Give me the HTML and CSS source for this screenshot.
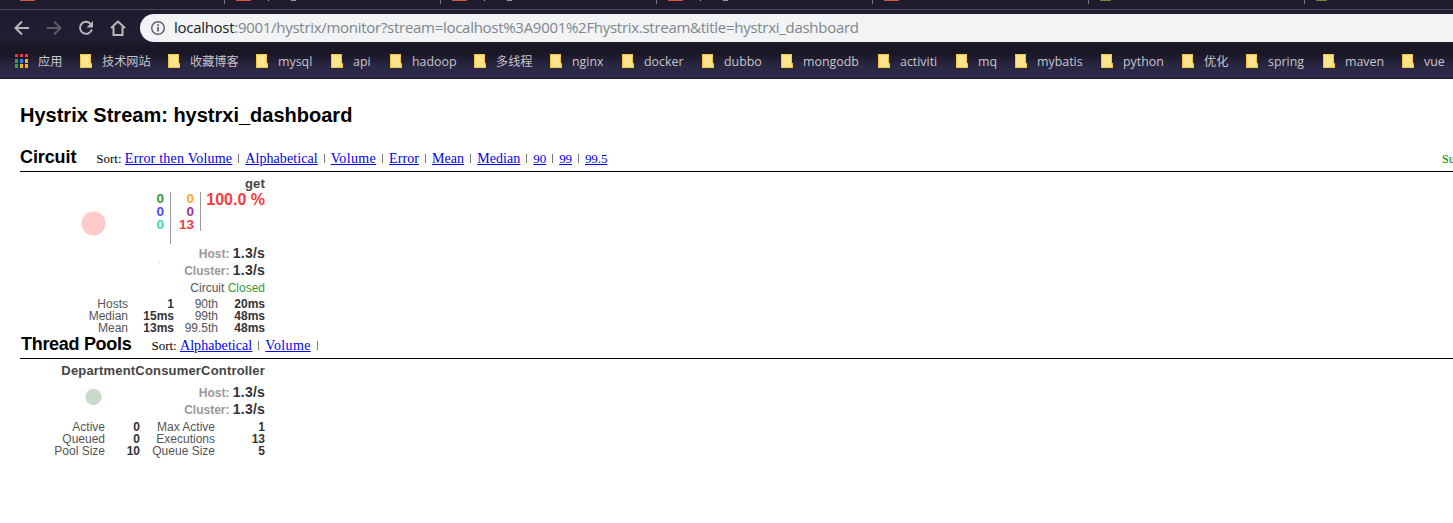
FILE: index.html
```html
<!DOCTYPE html>
<html lang="en">
<head>
<meta charset="utf-8">
<title>Hystrix Monitor</title>
<link rel="stylesheet" href="styles.css">
</head>
<body>
<header class="browser">
  <div class="tabs">
    <div class="tab"><i class="fav red"></i></div>
    <div class="tab"><i class="fav red"></i><i class="stem"></i><i class="loop"></i></div>
    <div class="tab"><i class="fav red"></i><i class="stem"></i><i class="loop"></i></div>
    <div class="tab"><i class="fav red"></i><i class="stem"></i><i class="loop"></i></div>
    <div class="tab"><i class="fav red"></i></div>
    <div class="tab"><i class="fav olive"></i></div>
    <div class="tab"><i class="fav olive"></i></div>
  </div>
  <div class="toolbar">
    <svg class="nav" viewBox="0 0 140 28" fill="none" stroke="#b9b9bc" stroke-width="2">
      <path d="M29 14H16.5M22 7.5 15.5 14 22 20.5"/>
      <path stroke="#5c5a66" d="M47 14H60M54 7.5 60.500 14 54 20.500"/>
      <path d="M90.500 9.800A6 6 0 1 0 91.800 15.500"/>
      <path fill="#b9b9bc" stroke="none" d="M93 7v6.500h-6.500z"/>
      <path d="M111 14 118 7.500 125 14M113.500 13V21H122.500V13"/>
    </svg>
    <div class="address">
      <svg class="info" viewBox="0 0 16 16" fill="none" stroke="#5f6368"><circle cx="8" cy="8" r="6.300" stroke-width="1.500"/><path stroke-width="1.800" d="M8 7v4.500M8 4.200v1.800"/></svg>
      <span class="url"><b>localhost</b>:9001/hystrix/monitor?stream=localhost%3A9001%2Fhystrix.stream&amp;title=hystrxi_dashboard</span>
    </div>
  </div>
  <nav class="bookmarks">
    <a class="apps"><svg class="grid" viewBox="0 0 13 14"><path fill="#f33" d="M0 0h3v3H0zM5 0h3v3H5zM10 0h3v3h-3z"/><path fill="#2fa35b" d="M0 5h3v4H0zM0 10h3v4H0z"/><path fill="#2684fc" d="M5 5h3v4H5z"/><path fill="#ffad0a" d="M10 5h3v4h-3zM5 10h3v4H5zM10 10h3v4h-3z"/></svg>应用</a>
    <a class="w88 cjk"><i class="folder"></i>技术网站</a>
    <a class="w88 cjk"><i class="folder"></i>收藏博客</a>
    <a class="w75"><i class="folder"></i>mysql</a>
    <a class="w59"><i class="folder"></i>api</a>
    <a class="w84"><i class="folder"></i>hadoop</a>
    <a class="w76 cjk"><i class="folder"></i>多线程</a>
    <a class="w72"><i class="folder"></i>nginx</a>
    <a class="w80"><i class="folder"></i>docker</a>
    <a class="w79"><i class="folder"></i>dubbo</a>
    <a class="w97"><i class="folder"></i>mongodb</a>
    <a class="w78"><i class="folder"></i>activiti</a>
    <a class="w59"><i class="folder"></i>mq</a>
    <a class="w86"><i class="folder"></i>mybatis</a>
    <a class="w81"><i class="folder"></i>python</a>
    <a class="w64 cjk"><i class="folder"></i>优化</a>
    <a class="w77"><i class="folder"></i>spring</a>
    <a class="w79"><i class="folder"></i>maven</a>
    <a class="w51"><i class="folder"></i>vue</a>
  </nav>
</header>
<main>
  <h1>Hystrix Stream: hystrxi_dashboard</h1>
  <div class="bar">
    <h2>Circuit</h2>
    <div class="sort">Sort:&nbsp;<a class="wide">Error then Volume</a><s></s><a>Alphabetical</a><s></s><a class="vol">Volume</a><s></s><a>Error</a><s></s><a>Mean</a><s></s><a>Median</a><s></s><a class="num">90</a><s></s><a class="num">99</a><s></s><a class="num">99.5</a></div>
    <div class="legend">Su</div>
  </div>
  <section class="monitor circuit">
    <h3>get</h3>
    <div class="summary">
      <svg class="bubble" viewBox="0 0 100 70"><circle cx="73.500" cy="31.500" r="12" fill="#ffcaca"/></svg>
      <div class="counts left"><span class="green">0</span><span class="blue">0</span><span class="teal">0</span></div>
      <div class="counts right"><span class="orange">0</span><span class="purple">0</span><span class="red-text">13</span></div>
      <div class="percent">100.0 %</div>
    </div>
    <div class="rates">
      <svg class="spark" viewBox="0 0 3 3"><path fill="#a9c9e2" d="M1 1h1v1H1z"/></svg>
      <div class="rate">Host: <b>1.3/s</b></div>
      <div class="rate">Cluster: <b>1.3/s</b></div>
    </div>
    <div class="status">Circuit <span class="green">Closed</span></div>
    <div class="stats circuit-stats">
      <span>Hosts</span><b>1</b><span>90th</span><b>20ms</b>
      <span>Median</span><b>15ms</b><span>99th</span><b>48ms</b>
      <span>Mean</span><b>13ms</b><span>99.5th</span><b>48ms</b>
    </div>
  </section>
  <div class="bar pools">
    <h2>Thread Pools</h2>
    <div class="sort">Sort:&nbsp;<a>Alphabetical</a><s></s><a class="vol">Volume</a><s></s></div>
  </div>
  <section class="monitor pool">
    <h3>DepartmentConsumerController</h3>
    <div class="pool-rates">
      <svg class="dot" viewBox="0 0 18 18"><circle cx="9.500" cy="9" r="8.200" fill="#cbdbcb"/></svg>
      <div>
        <div class="rate">Host: <b>1.3/s</b></div>
        <div class="rate">Cluster: <b>1.3/s</b></div>
      </div>
    </div>
    <div class="stats pool-stats">
      <span>Active</span><b>0</b><span>Max Active</span><b>1</b>
      <span>Queued</span><b>0</b><span>Executions</span><b>13</b>
      <span>Pool Size</span><b>10</b><span>Queue Size</span><b>5</b>
    </div>
  </section>
</main>
</body>
</html>
```
FILE: styles.css
```css
* { box-sizing: border-box; }
body { margin: 0; width: 1453px; height: 523px; overflow: hidden; background: #fff; font-family: "Liberation Sans", Arial, sans-serif; }

/* Browser chrome */
.browser { height: 79px; overflow: hidden; background: linear-gradient(#1e1b2d 0, #201e32 40px, #1a1725 48px, #1a1726 54px, #2a2743 66px, #2e2b4a 77px, #1b1829 78px); }
.tabs { display: flex; height: 10px; padding-left: 8px; border-bottom: 1px solid #4c4a57; }
.tab { display: flex; flex: none; width: 216px; height: 9px; padding-left: 12px; overflow: hidden; }
.tab:nth-child(n+2) { background: linear-gradient(#75737d, #75737d) no-repeat 0 0 / 1px 4px; }
.fav { width: 15px; height: 1px; margin-right: 17px; border-radius: 0 0 2px 2px; }
.red { background: #e2543f; }
.olive { background: #7c8835; width: 11px; }
.stem { width: 1px; height: 1px; background: #b5b4ba; }
.loop { width: 5px; height: 1px; margin-left: 22px; background: #99989f; }
.toolbar { display: flex; height: 36px; padding-top: 4px; }
.nav { width: 140px; height: 28px; flex: none; }
.address { display: flex; align-items: center; flex: 1; height: 28px; padding-left: 10px; border-radius: 14px 0 0 14px; background: #f1f3f4; }
.info { width: 16px; height: 16px; margin-right: 8px; }
.url { color: #80868b; font: 15px/26px "Open Sans", sans-serif; height: 28px; letter-spacing: -.285px; white-space: nowrap; }
.url b { color: #202124; font-weight: 400; }
.bookmarks { display: flex; height: 31px; padding-left: 15px; color: #c6c5ca; font: 12.4px/29px "Open Sans", "Noto Sans CJK SC", sans-serif; white-space: nowrap; }
.bookmarks a { display: flex; align-items: center; flex: none; height: 30px; }
.bookmarks .cjk, .bookmarks .apps { font-size: 12.2px; }
.apps { width: 65px; }
.grid { width: 13px; height: 14px; margin-right: 10px; }
.folder { width: 12px; height: 14px; margin-right: 10px; background: linear-gradient(#ffe48e, #ffe48e) no-repeat 1px 1px / 9px 12px, linear-gradient(#ffe48e, #ffe48e) no-repeat 10px 10px / 1px 3px, linear-gradient(#efc541, #efc541) no-repeat 0 0 / 11px 14px, linear-gradient(#efc541, #efc541) no-repeat 10px 9px / 2px 5px; }
.w51 { width: 51px; } .w59 { width: 59px; } .w64 { width: 64px; } .w72 { width: 72px; }
.w75 { width: 75px; } .w76 { width: 76px; } .w77 { width: 77px; } .w78 { width: 78px; }
.w79 { width: 79px; } .w80 { width: 80px; } .w81 { width: 81px; } .w84 { width: 84px; }
.w86 { width: 86px; } .w88 { width: 88px; } .w97 { width: 97px; }

/* Dashboard */
main { padding: 24px 0 0 20px; }
h1 { margin: 0; height: 42px; font-size: 20px; line-height: 24px; }
h2 { margin: 0; font-size: 18px; line-height: 24px; letter-spacing: -.1px; }
.bar { display: flex; height: 27px; border-bottom: 1px solid #000; overflow: hidden; }
.sort { display: flex; margin-left: 20px; font: 13px/28px "Liberation Serif", serif; white-space: nowrap; }
.sort a { color: #00e; text-decoration: underline; font-size: 14px; letter-spacing: .07px; }
.sort .wide { letter-spacing: .22px; }
.sort .vol { letter-spacing: .35px; }
.sort .num { font-size: 13px; letter-spacing: -.1px; }
.sort s { width: 1px; height: 9px; margin: 9px 6px 0; background: #777; }
.legend { margin-left: auto; width: 11px; overflow: hidden; color: #008000; font: 12px/28px "Liberation Serif", serif; }
.monitor { width: 245px; color: #333; }
h3 { margin: 0; text-align: right; font-size: 13px; color: #444; letter-spacing: .18px; }
.circuit { height: 160px; padding-top: 4px; }
.circuit h3 { height: 16px; line-height: 16px; }
.summary { display: flex; height: 53px; }
.bubble { width: 100px; height: 70px; }
.counts { display: flex; flex-direction: column; align-items: flex-end; font: bold 13.5px/13px "Liberation Sans", sans-serif; border-right: 1px solid #999; }
.left { width: 51px; height: 52px; padding-right: 6px; }
.right { width: 30px; height: 39px; padding-right: 6px; }
.percent { flex: 1; text-align: right; color: #f73b3b; font: bold 16px/16px "Liberation Sans", sans-serif; white-space: nowrap; }
.green { color: #3a9a3a; } .blue { color: #4a4af2; } .teal { color: #38d7a7; }
.orange { color: #fba832; } .purple { color: #963596; } .red-text { color: #f73b3b; }
.rates { position: relative; }
.spark { position: absolute; left: 138px; top: 16px; width: 3px; height: 3px; }
.rate { height: 17px; text-align: right; color: #999; font: bold 12px/17px "Liberation Sans", sans-serif; white-space: nowrap; }
.rate b { color: #333; font-size: 14px; letter-spacing: .2px; }
.status { height: 19px; text-align: right; font-size: 12px; line-height: 18px; color: #555; }
.stats { display: grid; grid-auto-rows: 12px; text-align: right; font-size: 12px; line-height: 12px; white-space: nowrap; color: #555; }
.stats b { color: #333; }
.circuit-stats { grid-template-columns: 108px 46px 44px 47px; }
.pools h2 { padding-left: 1px; letter-spacing: -.3px; }
.pool h3 { height: 25px; line-height: 24px; }
.pool-rates { display: flex; justify-content: space-between; height: 37px; padding-left: 64px; }
.dot { width: 18px; height: 18px; margin-top: 4px; }
.pool-stats { grid-template-columns: 85px 35px 75px 50px; }
h1 { letter-spacing: 0; }
```
